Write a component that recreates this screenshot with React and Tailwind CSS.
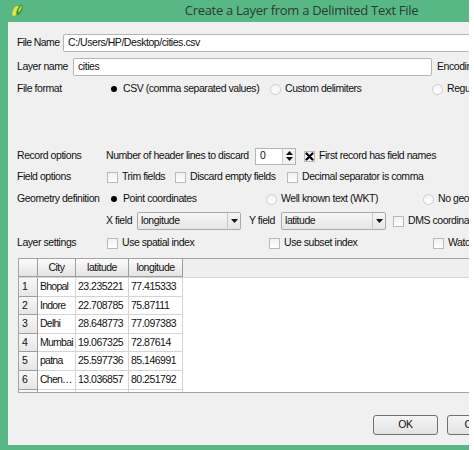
import React from "react";

const Check = ({ checked }) => (
  <span className="w-[11px] h-[11px] shrink-0 border border-[#b9b9b9] bg-gradient-to-b from-[#f1f1f1] to-white flex items-center justify-center">
    {checked && (
      <svg width="9" height="9" viewBox="0 0 9 9">
        <path d="M1.5 1.5 L7.5 7.5 M7.5 1.5 L1.5 7.5" stroke="#000" strokeWidth="2.2" strokeLinecap="round" />
      </svg>
    )}
  </span>
);

const Radio = ({ checked }) => (
  <span
    className={
      "w-[11px] h-[11px] shrink-0 rounded-full border flex items-center justify-center " +
      (checked ? "border-[#ececec] bg-[#f0f0f0]" : "border-[#cdcdcd] bg-gradient-to-b from-[#f3f3f3] to-white")
    }
  >
    {checked && <span className="w-[6px] h-[6px] rounded-full bg-black" />}
  </span>
);

const Opt = ({ w, radio, checked, children }) => (
  <div className="flex items-center gap-[4px] shrink-0" style={{ width: w }}>
    {radio ? <Radio checked={checked} /> : <Check checked={checked} />}
    <span className="whitespace-nowrap">{children}</span>
  </div>
);

const Combo = ({ w, value }) => (
  <div className="h-[18px] border border-[#a9a9a9] rounded-[2px] bg-gradient-to-b from-[#f6f6f6] to-[#e6e6e6] flex items-center shrink-0" style={{ width: w }}>
    <span className="flex-1 pl-[3px]">{value}</span>
    <span className="w-[13px] h-full border-l border-[#c8c8c8] flex items-center justify-center">
      <svg width="7" height="4" viewBox="0 0 7 4">
        <path d="M0 0 L7 0 L3.5 4 Z" fill="#111" />
      </svg>
    </span>
  </div>
);

const rows = [
  ["1", "Bhopal", "23.235221", "77.415333"],
  ["2", "Indore", "22.708785", "75.87111"],
  ["3", "Delhi", "28.648773", "77.097383"],
  ["4", "Mumbai", "19.067325", "72.87614"],
  ["5", "patna", "25.597736", "85.146991"],
  ["6", "Chen…", "13.036857", "80.251792"],
  ["7", "", "", ""],
];

const hdr = "h-full shrink-0 border-r border-b border-[#9d9d9d] bg-gradient-to-b from-[#fbfbfb] to-[#e4e4e4] flex items-center justify-center";

export default function App() {
  return (
    <div className="w-[474px] h-[450px] flex overflow-hidden bg-white text-[#111] font-['Liberation_Sans',Arial,sans-serif] text-[10.5px] tracking-[-0.45px]">
      <div className="w-[469px] h-[450px] bg-[#57b886] flex flex-col">
        {/* title bar */}
        <div className="h-[22px] relative flex items-center justify-center shrink-0">
          <svg className="absolute left-[11px] top-[3px]" width="13" height="14" viewBox="0 0 13 14">
            <ellipse cx="4.5" cy="8" rx="2.6" ry="5.4" transform="rotate(25 4.5 8)" fill="#e8e23a" />
            <ellipse cx="8.5" cy="7" rx="2.4" ry="5.6" transform="rotate(25 8.5 7)" fill="#3f8f2c" />
            <ellipse cx="9" cy="6" rx="1" ry="3.4" transform="rotate(25 9 6)" fill="#b7d94a" />
          </svg>
          <span className="ml-[134px] text-[13px] tracking-[-0.3px] text-[#2c3a33] font-['Open_Sans',sans-serif]">
            Create a Layer from a Delimited Text File
          </span>
        </div>

        {/* body */}
        <div className="ml-[8px] h-[423px] bg-[#f0f0f0] overflow-hidden pl-[9px] flex flex-col">
          <div className="mt-[11px] h-[20px] flex items-center">
            <span className="w-[46px] shrink-0 whitespace-nowrap tracking-[-0.6px]">File Name</span>
            <div className="h-[18px] w-[430px] shrink-0 bg-white border border-[#b5b5b5] rounded-[2px] flex items-center pl-[4px]">
              C:/Users/HP/Desktop/cities.csv
            </div>
          </div>

          <div className="mt-[4px] h-[20px] flex items-center">
            <span className="w-[56px] shrink-0">Layer name</span>
            <div className="h-[18px] w-[359px] shrink-0 bg-white border border-[#b5b5b5] rounded-[2px] flex items-center pl-[4px]">
              cities
            </div>
            <span className="ml-[5px] whitespace-nowrap">Encoding</span>
          </div>

          <div className="mt-[2px] h-[20px] flex items-center">
            <span className="w-[91px] shrink-0">File format</span>
            <Opt w={162} radio checked>CSV (comma separated values)</Opt>
            <Opt w={162} radio>Custom delimiters</Opt>
            <Opt w={60} radio>Regular expression</Opt>
          </div>

          <div className="mt-[47px] h-[20px] flex items-center">
            <span className="w-[89px] shrink-0">Record options</span>
            <span className="w-[149px] shrink-0 whitespace-nowrap">Number of header lines to discard</span>
            <div className="w-[41px] h-[17px] shrink-0 bg-white border border-[#b5b5b5] flex">
              <span className="flex-1 pl-[4px] flex items-center">0</span>
              <span className="w-[13px] border-l border-[#d0d0d0] bg-[#f2f2f2] flex flex-col items-center justify-center gap-[2px]">
                <svg width="7" height="4" viewBox="0 0 7 4"><path d="M0 4 L7 4 L3.5 0 Z" fill="#111" /></svg>
                <svg width="7" height="4" viewBox="0 0 7 4"><path d="M0 0 L7 0 L3.5 4 Z" fill="#111" /></svg>
              </span>
            </div>
            <div className="ml-[8px]">
              <Opt w={160} checked>First record has field names</Opt>
            </div>
          </div>

          <div className="mt-[1px] h-[20px] flex items-center">
            <span className="w-[90px] shrink-0">Field options</span>
            <Opt w={68}>Trim fields</Opt>
            <Opt w={112}>Discard empty fields</Opt>
            <Opt w={160}>Decimal separator is comma</Opt>
          </div>

          <div className="mt-[2px] h-[20px] flex items-center">
            <span className="w-[91px] shrink-0 whitespace-nowrap">Geometry definition</span>
            <Opt w={158} radio checked>Point coordinates</Opt>
            <Opt w={157} radio>Well known text (WKT)</Opt>
            <Opt w={60} radio>No geometry</Opt>
          </div>

          <div className="mt-[2px] h-[20px] flex items-center">
            <span className="w-[89px] shrink-0" />
            <span className="w-[31px] shrink-0">X field</span>
            <Combo w={104} value="longitude" />
            <span className="ml-[8px] w-[32px] shrink-0">Y field</span>
            <Combo w={105} value="latitude" />
            <div className="ml-[7px]">
              <Opt w={90}>DMS coordinates</Opt>
            </div>
          </div>

          <div className="mt-[2px] h-[20px] flex items-center">
            <span className="w-[90px] shrink-0">Layer settings</span>
            <Opt w={162}>Use spatial index</Opt>
            <Opt w={164}>Use subset index</Opt>
            <Opt w={60}>Watch file</Opt>
          </div>

          {/* table */}
          <div className="mt-[5px] ml-[1px] h-[135px] w-[460px] shrink-0 border border-[#a3a3a3] bg-white overflow-hidden tracking-[-0.5px]">
            <div className="h-[19px] flex bg-[#efefef] border-b border-[#d6d6d6]">
              <div className={hdr + " w-[19px]"} />
              <div className={hdr + " w-[38px]"}>City</div>
              <div className={hdr + " w-[53px]"}>latitude</div>
              <div className={hdr + " w-[54px]"}>longitude</div>
            </div>
            {rows.map((r) => (
              <div key={r[0]} className="h-[18.6px] flex">
                <div className="w-[19px] h-full shrink-0 border-r border-b border-[#9d9d9d] bg-gradient-to-b from-[#f7f7f7] to-[#e6e6e6] flex items-center pl-[3px]">
                  {r[0]}
                </div>
                <div className="w-[38px] h-full shrink-0 border-r border-b border-[#d4d4d4] flex items-center pl-[2px] whitespace-nowrap overflow-hidden tracking-[-0.75px]">{r[1]}</div>
                <div className="w-[53px] h-full shrink-0 border-r border-b border-[#d4d4d4] flex items-center pl-[2px]">{r[2]}</div>
                <div className="w-[54px] h-full shrink-0 border-r border-b border-[#d4d4d4] flex items-center pl-[2px]">{r[3]}</div>
              </div>
            ))}
          </div>

          {/* buttons */}
          <div className="mt-[22px] h-[20px] flex items-center gap-[9px] pl-[356px]">
            <button className="w-[65px] h-[20px] shrink-0 border border-[#707070] rounded-[3px] bg-gradient-to-b from-[#f4f4f4] to-[#e3e3e3] flex items-center justify-center">
              OK
            </button>
            <button className="w-[65px] h-[20px] shrink-0 border border-[#707070] rounded-[3px] bg-gradient-to-b from-[#f4f4f4] to-[#e3e3e3] flex items-center justify-center">
              Cancel
            </button>
          </div>
        </div>
      </div>
      <div className="w-[5px] h-[450px] bg-white shrink-0" />
    </div>
  );
}
